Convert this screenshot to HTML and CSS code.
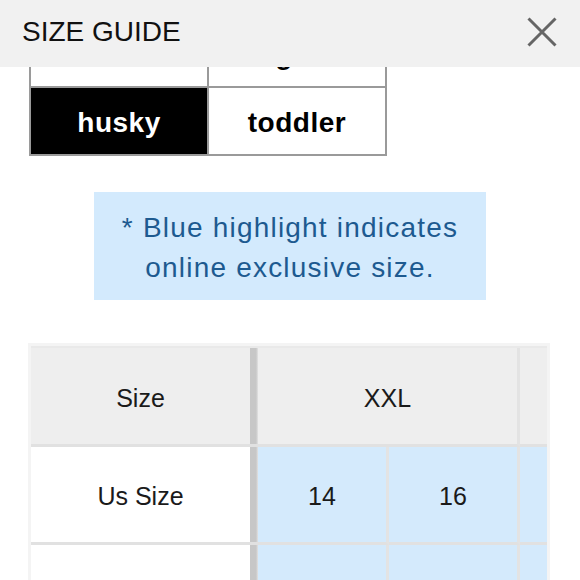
FILE: index.html
```html
<!DOCTYPE html>
<html lang="en">
<head>
<meta charset="utf-8">
<title>Size Guide</title>
<link rel="stylesheet" href="styles.css">
</head>
<body>
<header class="topbar">
  <h1 class="title">SIZE GUIDE</h1>
  <button class="close" aria-label="Close">
    <svg width="30" height="30" viewBox="0 0 30 30"><path d="M1.5 1.5 L28.5 28.5 M28.5 1.5 L1.5 28.5" stroke="#656565" stroke-width="3" fill="none"/></svg>
  </button>
</header>
<main class="content">
  <div class="seg-viewport">
    <div class="segments">
      <div class="seg"></div>
      <div class="seg">regular</div>
      <div class="seg seg-active">husky</div>
      <div class="seg">toddler</div>
    </div>
  </div>
  <p class="note">* Blue highlight indicates<br>online exclusive size.</p>
  <div class="table-frame">
    <div class="size-table">
      <div class="cell cell-first cell-head">Size</div>
      <div class="cell cell-head cell-span2">XXL</div>
      <div class="cell cell-head"></div>
      <div class="cell cell-first">Us Size</div>
      <div class="cell cell-blue">14</div>
      <div class="cell cell-blue">16</div>
      <div class="cell cell-blue"></div>
      <div class="cell cell-first"></div>
      <div class="cell cell-blue"></div>
      <div class="cell cell-blue"></div>
      <div class="cell cell-blue"></div>
    </div>
  </div>
</main>
</body>
</html>
```
FILE: styles.css
```css
html, body {
  margin: 0;
  padding: 0;
  background: #ffffff;
  font-family: "Liberation Sans", Arial, sans-serif;
  color: #111;
  overflow: hidden;
}

.topbar {
  height: 67px;
  box-sizing: border-box;
  padding: 0 23px 1px 22px;
  background: #f1f1f1;
  display: flex;
  align-items: center;
  justify-content: space-between;
}

.title {
  margin: 0 0 3px 0;
  font-size: 28px;
  font-weight: normal;
  color: #111;
}

.close {
  border: 0;
  padding: 0;
  margin: 0 0 3px 0;
  background: transparent;
  width: 30px;
  height: 30px;
  display: block;
}

.close svg {
  display: block;
}

.seg-viewport {
  overflow: hidden;
}

.segments {
  margin: -49px 0 0 29px;
  width: 358px;
  box-sizing: border-box;
  display: grid;
  grid-template-columns: 176px 176px;
  grid-auto-rows: 66px;
  gap: 2px;
  padding: 2px;
  background: #9a9a9a;
}

.seg {
  background: #fff;
  display: flex;
  align-items: center;
  justify-content: center;
  padding-top: 3px;
  box-sizing: border-box;
  font-size: 28px;
  font-weight: bold;
  letter-spacing: 0.5px;
  color: #000;
}

.seg-active {
  background: #000;
  color: #fff;
}

.note {
  width: 392px;
  box-sizing: border-box;
  margin: 36px auto 0;
  padding: 16px 0 12px;
  background: #d3eafd;
  color: #1d5a90;
  font-size: 28px;
  line-height: 40px;
  letter-spacing: 1.2px;
  text-align: center;
}

.table-frame {
  margin: 43px 0 0 28px;
  width: 522px;
  box-sizing: border-box;
  border: 3px solid #f4f4f4;
  overflow: hidden;
}

.size-table {
  display: grid;
  grid-template-columns: 227px 131px 131px 131px;
  grid-template-rows: 99px 98px 98px;
  border-top: 2px solid #e9e9e9;
  width: 620px;
}

.cell {
  box-sizing: border-box;
  display: flex;
  align-items: center;
  justify-content: center;
  padding-top: 4px;
  font-size: 25px;
  color: #1a1a1a;
  border-right: 3px solid #e3e3e3;
  border-bottom: 3px solid #e1e1e1;
  background: #fff;
}

.cell-head {
  background: #eeeeee;
}

.cell-span2 {
  grid-column: span 2;
}

.cell-blue {
  background: #d4eafc;
}

.cell-first {
  border-right: 0;
  padding-right: 8px;
  background: linear-gradient(to left, #e2e2e2 0, #c7c7c7 2px, #c7c7c7 8px, transparent 8px), #fff;
}

.cell-first.cell-head {
  background: linear-gradient(to left, #e2e2e2 0, #c7c7c7 2px, #c7c7c7 8px, transparent 8px), #eeeeee;
}
```
